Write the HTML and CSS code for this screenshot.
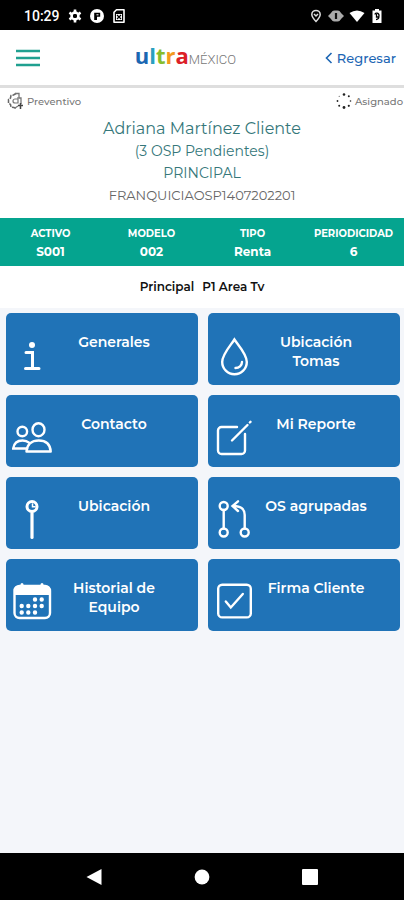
FILE: index.html
```html
<!DOCTYPE html>
<html lang="es">
<head>
<meta charset="utf-8">
<meta name="viewport" content="width=device-width, initial-scale=1">
<title>Ultra México</title>
<link rel="stylesheet" href="styles.css">
</head>
<body>
<div class="status">
  <span class="clock">10:29</span>
  <svg class="status-icon" viewBox="0 0 14 14" aria-hidden="true"><circle cx="7" cy="7" r="3.4" fill="none" stroke="#fff" stroke-width="2.6"/><g stroke="#fff" stroke-width="2.6"><path d="M7 .5v3M7 10.5v3M1.4 3.7L4 5.3M10 8.7l2.6 1.6M1.4 10.3L4 8.7M10 5.3l2.6-1.6"/></g><circle cx="7" cy="7" r="2" fill="#000"/></svg>
  <svg class="status-icon" viewBox="0 0 14 14" aria-hidden="true"><circle cx="7" cy="7" r="7" fill="#fff"/><path d="M4.2 11V3.800h6v4H7V11z" fill="#000"/><path d="M6.500 5.800h2" stroke="#fff"/></svg>
  <svg class="status-icon" viewBox="0 0 14 14" aria-hidden="true"><path d="M4.5 .8H12v12.4H2V3.3z" fill="none" stroke="#fff" stroke-width="1.6" stroke-linejoin="round"/><path d="M4 5h6v6H4z" fill="#fff"/><path d="M5 6l4 4M9 6l-4 4" stroke="#000" stroke-width="1.2"/></svg>
  <div class="system">
    <svg class="status-icon" viewBox="0 0 14 14" aria-hidden="true"><path d="M7 12.500C4 9.500 2.800 7.800 2.800 5.600a4.200 4.200 0 0 1 8.400 0C11.200 7.800 10 9.500 7 12.500z" fill="none" stroke="#ddd" stroke-width="1.500"/><path d="M5 5l2 2 2-2" fill="none" stroke="#ddd" stroke-width="1.500"/></svg>
    <svg class="status-icon wide" viewBox="0 0 16 14" aria-hidden="true"><path d="M0 7l4-4v8zM16 7l-4-4v8z" fill="#aaa"/><rect x="3.500" y="1.500" width="9" height="11" rx="3" fill="#aaa"/><path d="M8 4v6" stroke="#111" stroke-width="2.200"/></svg>
    <svg class="status-icon wide" viewBox="0 0 16 14" aria-hidden="true"><path d="M.5 4Q8-1 15.500 4L8 13z" fill="#fff"/></svg>
    <svg class="status-icon" viewBox="0 0 14 14" aria-hidden="true"><path d="M5 0h4v1.500h2.500V14h-9V1.500H5z" fill="#fff"/><path d="M5 5.500C5 3.500 9 3.500 9 6.500S8 10.500 6 10.500M6.500 5v3h2" fill="none" stroke="#000" stroke-width="1.300"/></svg>
  </div>
</div>

<header class="topbar">
  <button class="menu" type="button" aria-label="Menú"><svg viewBox="0 0 24 18" aria-hidden="true"><path d="M0 2h24M0 9h24M0 16h24" stroke="#20a090" stroke-width="2.400"/></svg></button>
  <div class="logo"><span class="ultra"><span class="u">u</span><span class="l">l</span><span class="t">t</span><span class="r">r</span><span class="a">a</span></span><span class="mexico">MÉXICO</span></div>
  <a class="back" href="#"><svg viewBox="0 0 8 12" aria-hidden="true"><path d="M6.500 1L1.500 6l5 5" fill="none" stroke="currentColor" stroke-width="1.600"/></svg>Regresar</a>
</header>

<section class="info">
  <div class="tags">
    <span class="tag"><svg viewBox="0 0 18 18" aria-hidden="true"><path d="M9 1.500L6.500 3 4 3.500 3.500 6 1.500 7.500V11l2 1.500.5 2.500 3 .5 2 1" fill="none" stroke="#666" stroke-width="1.500" stroke-dasharray="4 1"/><path d="M8 1.500h4V6h2v6M8 16l3-2" fill="none" stroke="#777" stroke-width="1.300"/><path d="M11 7H8a2 2 0 0 0 0 4h3V5" fill="none" stroke="#777" stroke-width="1.200"/><path d="M13.500 11v6M11 13.500h5" stroke="#444" stroke-width="1.500"/></svg>Preventivo</span>
    <span class="tag"><svg viewBox="0 0 18 18" aria-hidden="true"><g fill="#222"><circle cx="9" cy="2.500" r="1.300"/><circle cx="9" cy="15.500" r="1.400"/><circle cx="13.800" cy="4.200" r="1"/><circle cx="15.500" cy="9" r=".8"/><circle cx="13.800" cy="13.800" r="1.100"/><circle cx="4.200" cy="13.800" r="1"/><circle cx="2.500" cy="9" r=".9"/><circle cx="4.200" cy="4.200" r=".5"/></g></svg>Asignado</span>
  </div>
  <h1>Adriana Martínez Cliente</h1>
  <p class="pending">(3 OSP Pendientes)</p>
  <p class="pending">PRINCIPAL</p>
  <p class="code">FRANQUICIAOSP1407202201</p>
</section>

<dl class="asset">
  <div><dt>ACTIVO</dt><dd>S001</dd></div>
  <div><dt>MODELO</dt><dd>002</dd></div>
  <div><dt>TIPO</dt><dd>Renta</dd></div>
  <div><dt>PERIODICIDAD</dt><dd>6</dd></div>
</dl>
<h2 class="area"><span>Principal</span><span>P1 Area Tv</span></h2>

<main class="grid">
  <button class="tile" type="button"><svg viewBox="0 0 40 40" aria-hidden="true"><circle cx="20" cy="9" r="3" class="solid"/><path d="M14 16.500h6.500V32M13.500 32.500h13.500" stroke-width="3"/></svg><span>Generales</span></button>
  <button class="tile" type="button"><svg viewBox="0 0 40 40" aria-hidden="true"><path d="M20.400 3.500C17 9 8.200 18 8.200 26a12.300 12.300 0 0 0 24.600 0C32.800 18 24 9 20.400 3.500z"/><path d="M28 26c0 3.500-3 6-6.500 6"/></svg><span>Ubicación Tomas</span></button>
  <button class="tile" type="button"><svg viewBox="0 0 40 40" aria-hidden="true"><circle cx="10.300" cy="13.500" r="4.800"/><ellipse cx="26.500" cy="11.700" rx="6" ry="6.500"/><path d="M15 30.500H1.200C2 25 6 22.500 10.500 22.500c2.500 0 5 .8 6.500 2.200"/><path d="M14.500 33.500C15 26 20 22.500 26.700 22.500S38.200 26 38.700 33.500z" stroke-linejoin="round"/></svg><span>Contacto</span></button>
  <button class="tile" type="button"><svg viewBox="0 0 40 40" aria-hidden="true"><path d="M23 9H7.500a3.500 3.500 0 0 0-3.500 3.500v20A3.500 3.500 0 0 0 7.500 36h20a3.500 3.500 0 0 0 3.500-3.500V16M18 22.500L33.500 7M35.800 4.500l.7-.7"/></svg><span>Mi Reporte</span></button>
  <button class="tile" type="button"><svg viewBox="0 0 40 40" aria-hidden="true"><circle cx="20" cy="6.500" r="5" stroke-width="3"/><path d="M20 13v24.500" stroke-width="3.200"/><path d="M20.500 4v2.800h2.500" stroke-width="1.500"/></svg><span>Ubicación</span></button>
  <button class="tile" type="button"><svg viewBox="0 0 40 40" aria-hidden="true"><circle cx="9.700" cy="6" r="4"/><circle cx="9.700" cy="32.500" r="4"/><circle cx="30.700" cy="32.500" r="4"/><path d="M9.700 10v18.500M30.700 28.500V15c0-6-4-9-11-9M24 1.300L18.500 6l5.500 5"/></svg><span>OS agrupadas</span></button>
  <button class="tile" type="button"><svg viewBox="0 0 40 40" aria-hidden="true"><rect x="2.500" y="4" width="35.500" height="32" rx="5"/><path class="solid" d="M2 13V8a4 4 0 0 1 4-4h28a4 4 0 0 1 4 4v5z"/><path d="M10 2.500v3M30 2.500v3" stroke-width="3"/><path class="dots" d="M23 17.500h.01M29.700 17.500h.01M9.700 24h.01M16.300 24h.01M23 24h.01M29.700 24h.01M9.700 30.500h.01M16.300 30.500h.01M23 30.500h.01"/></svg><span>Historial de Equipo</span></button>
  <button class="tile" type="button"><svg viewBox="0 0 40 40" aria-hidden="true"><rect x="4.200" y="2.800" width="32.600" height="32.600" rx="4"/><path d="M11.800 19.500l5 6 12-13.500"/></svg><span>Firma Cliente</span></button>
</main>

<nav class="navbar" aria-label="Sistema">
  <button type="button" aria-label="Atrás"><svg viewBox="0 0 16 16" aria-hidden="true"><path d="M.5 8L15.500 0v16z" fill="#fff"/></svg></button>
  <button type="button" aria-label="Inicio"><svg viewBox="0 0 16 16" aria-hidden="true"><circle cx="8" cy="8" r="7.400" fill="#fff"/></svg></button>
  <button type="button" aria-label="Recientes"><svg viewBox="0 0 16 16" aria-hidden="true"><rect width="16" height="16" rx="1" fill="#fff"/></svg></button>
</nav>
</body>
</html>
```
FILE: styles.css
```css
* { box-sizing: border-box; }
body {
  margin: 0;
  min-height: 100vh;
  display: flex;
  flex-direction: column;
  background: #f4f6fa;
  font-family: Montserrat, Inter, sans-serif;
}
h1, h2, p, dl, dd { margin: 0; }
svg { display: block; flex: none; }
button { border: 0; padding: 0; background: none; font: inherit; color: inherit; }

.status {
  display: flex;
  align-items: center;
  gap: 8px;
  height: 30px;
  padding: 2px 20px 0 24px;
  background: #000;
  color: #fff;
}
.status-icon { width: 14px; height: 14px; }
.status-icon.wide { width: 16px; }
.clock { font: 500 14px/20px Roboto, sans-serif; }
.system { display: flex; gap: 5px; margin-left: auto; }

.topbar {
  display: grid;
  grid-template-columns: auto 1fr auto;
  align-items: center;
  height: 58px;
  padding: 0 8px 0 16px;
  background: #fff;
  border-bottom: 3px solid #dedede;
}
.menu svg { width: 24px; height: 18px; }
.logo {
  display: flex;
  align-items: baseline;
  justify-content: center;
  padding-left: 6px;
}
.ultra { font: 700 22px/28px "Open Sans", sans-serif; }
.u { color: #1b67b2; }
.l { color: #2a9fc0; }
.t { color: #86bd2d; }
.r { color: #f39a1e; }
.a { color: #dc2026; }
.mexico { font: 300 13px/28px Roboto, sans-serif; color: #777; }
.back {
  display: flex;
  align-items: center;
  gap: 4px;
  color: #1c66b4;
  font-size: 13px;
  font-weight: 500;
  text-decoration: none;
}
.back svg { width: 8px; height: 12px; }

.info {
  padding-bottom: 12px;
  background: #fff;
  color: #35777a;
  text-align: center;
}
.tags { display: flex; justify-content: space-between; padding: 4px 1px 0 7px; height: 30px; }
.tag {
  display: flex;
  align-items: center;
  gap: 2px;
  height: 18px;
  color: #777;
  font-size: 10px;
  font-weight: 500;
}
.tag svg { width: 18px; height: 18px; }
.info h1 { font-size: 16px; line-height: 22px; font-weight: 400; }
.pending { font-size: 14px; line-height: 22px; }
.code { font-size: 13px; line-height: 22px; color: #666; }

.asset {
  display: grid;
  grid-template-columns: repeat(4, 1fr);
  padding: 7px 0 5px;
  background: #05a48f;
  color: #fff;
  text-align: center;
  font-weight: 700;
  line-height: 18px;
}
.asset dt { font-size: 10px; }
.asset dd { font-size: 12px; }

.area {
  display: flex;
  justify-content: center;
  gap: 8px;
  background: #fff;
  font-size: 12px;
  line-height: 42px;
  font-weight: 600;
  color: #111;
}

.grid {
  flex: 1;
  display: grid;
  grid-template-columns: 1fr 1fr;
  align-content: start;
  gap: 10px;
  padding: 5px 4px 16px 6px;
}
.tile {
  display: flex;
  align-items: flex-start;
  gap: 6px;
  height: 72px;
  padding: 20px 28px 0 6px;
  border-radius: 5px;
  background: #2073b7;
  color: #fff;
  font-size: 14px;
  line-height: 19px;
  font-weight: 600;
}
.tile svg {
  width: 40px;
  height: 40px;
  margin-top: 3px;
  fill: none;
  stroke: #fff;
  stroke-width: 2.4px;
  stroke-linecap: round;
}
.tile svg .solid { fill: #fff; stroke: none; }
.tile svg .dots { stroke-width: 4.4px; }
.tile span { flex: 1; }

.navbar {
  display: flex;
  justify-content: center;
  align-items: center;
  gap: 92px;
  height: 47px;
  background: #000;
}
.navbar svg { width: 16px; height: 16px; }
```
